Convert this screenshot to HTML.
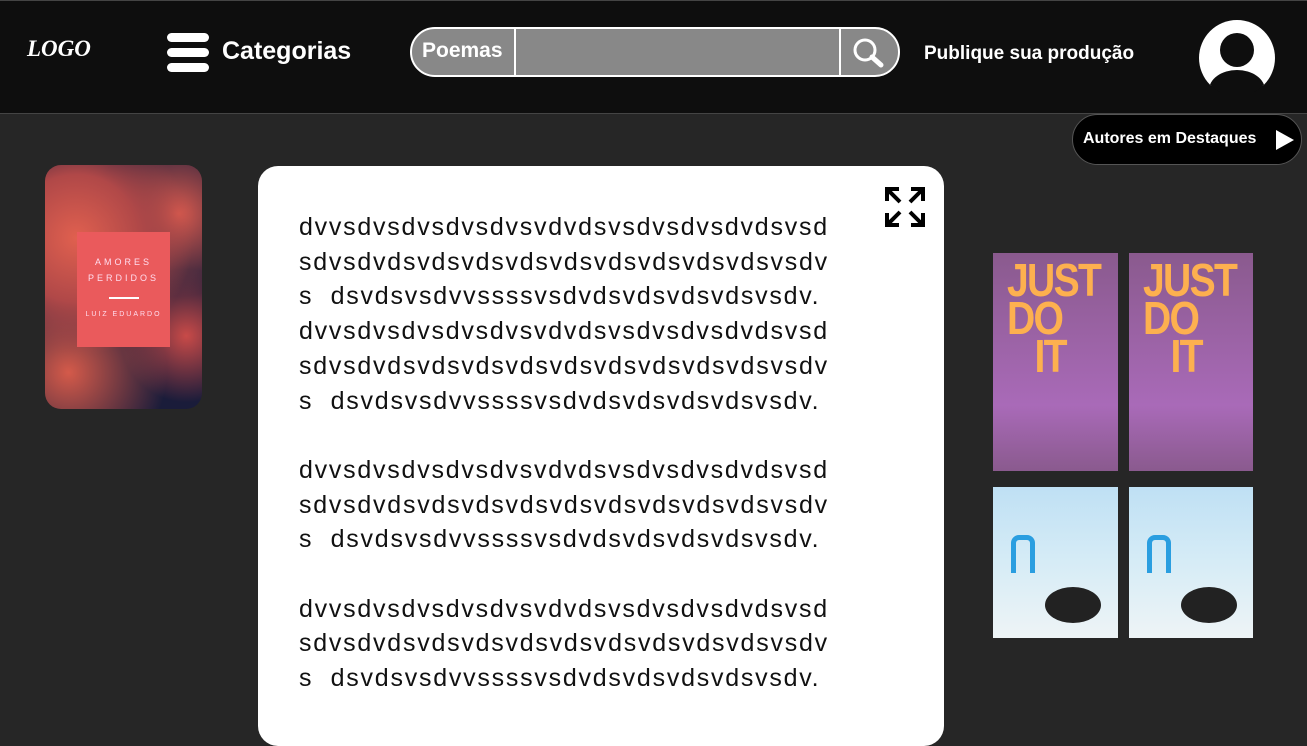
<!DOCTYPE html>
<html><head><meta charset="utf-8"><style>
*{margin:0;padding:0;box-sizing:border-box}
body{width:1307px;height:737px;background:#262626;font-family:"Liberation Sans",sans-serif;overflow:hidden;position:relative}
.hdr{position:absolute;left:0;top:0;width:1307px;height:114px;background:#0e0e0e;border-top:1px solid #444;border-bottom:1px solid #444}
.abs{position:absolute}
.nk{color:#fdb04f;font-weight:bold;font-size:46px;line-height:38px;padding:8px 0 0 14px;overflow:hidden;letter-spacing:-2px}
.nk span{display:inline-block;transform:scaleX(.85);transform-origin:left}
</style></head><body>
<div class="hdr"></div>
<div class="abs" style="left:27px;top:36px;color:#fff;font-family:'Liberation Serif',serif;font-style:italic;font-weight:bold;font-size:23px">LOGO</div>
<div class="abs" style="left:167px;top:33px;width:42px;height:9px;background:#fff;border-radius:5px"></div>
<div class="abs" style="left:167px;top:48px;width:42px;height:9px;background:#fff;border-radius:5px"></div>
<div class="abs" style="left:167px;top:63px;width:42px;height:9px;background:#fff;border-radius:5px"></div>
<div class="abs" style="left:222px;top:37px;color:#fff;font-weight:bold;font-size:25px">Categorias</div>
<div class="abs" style="left:410px;top:27px;width:490px;height:50px;background:#888;border:2px solid #fff;border-radius:25px"></div>
<div class="abs" style="left:514px;top:29px;width:2px;height:46px;background:#fff"></div>
<div class="abs" style="left:839px;top:29px;width:2px;height:46px;background:#fff"></div>
<div class="abs" style="left:422px;top:39px;color:#fff;font-weight:bold;font-size:21px">Poemas</div>
<svg class="abs" style="left:850px;top:36px" width="36" height="34" viewBox="0 0 36 34"><circle cx="15" cy="14" r="10" fill="none" stroke="#fff" stroke-width="3"/><line x1="22" y1="21" x2="31" y2="29" stroke="#fff" stroke-width="5" stroke-linecap="round"/></svg>
<div class="abs" style="left:924px;top:43px;color:#fff;font-weight:bold;font-size:19px">Publique sua produção</div>
<svg class="abs" style="left:1198px;top:20px" width="78" height="72" viewBox="0 0 78 72"><defs><clipPath id="c"><circle cx="39" cy="38" r="38"/></clipPath></defs><g clip-path="url(#c)"><rect x="0" y="0" width="78" height="66" fill="#fff"/><circle cx="39" cy="30" r="17" fill="#0e0e0e"/><ellipse cx="39" cy="70" rx="28" ry="20" fill="#0e0e0e"/><rect x="0" y="66" width="78" height="12" fill="#0e0e0e"/></g></svg>
<div class="abs" style="left:1072px;top:114px;width:230px;height:51px;background:#000;border:1px solid #555;border-radius:26px"></div>
<div class="abs" style="left:1083px;top:130px;color:#fff;font-weight:bold;font-size:16px">Autores em Destaques</div>
<svg class="abs" style="left:1275px;top:129px" width="20" height="22"><polygon points="1,1 19,11 1,21" fill="#fff"/></svg>
<div class="abs" style="left:45px;top:165px;width:157px;height:244px;border-radius:16px;overflow:hidden;background:radial-gradient(circle at 20% 30%,#e0604f 0,#b04848 30%,transparent 55%),radial-gradient(circle at 85% 20%,#d85a4e 0,transparent 35%),radial-gradient(circle at 15% 85%,#d45a4a 0,transparent 40%),radial-gradient(circle at 90% 70%,#c84a48 0,transparent 30%),#1a1c3a">
<div class="abs" style="left:32px;top:67px;width:93px;height:115px;background:#ea5a5c;color:#fde;text-align:center;font-size:9px;letter-spacing:3px">
<div style="margin-top:25px">AMORES</div><div style="margin-top:6px">PERDIDOS</div>
<div style="width:30px;height:2px;background:#fff;margin:14px auto 12px"></div>
<div style="font-size:7px;letter-spacing:2px;white-space:nowrap">LUIZ EDUARDO</div></div></div>
<div class="abs" style="left:258px;top:166px;width:686px;height:580px;background:#fff;border-radius:20px"></div>
<svg class="abs" style="left:884px;top:186px" width="42" height="42" viewBox="0 0 42 42" fill="none" stroke="#000" stroke-width="4"><path d="M3 15V3H15M3 3L16 16M27 3H39V15M39 3L26 16M3 27V39H15M3 39L16 26M39 27V39H27M39 39L26 26"/></svg>
<div class="abs" style="left:299px;top:210px;font-size:25px;line-height:34.7px;color:#111;letter-spacing:1.75px;white-space:pre">dvvsdvsdvsdvsdvsvdvdsvsdvsdvsdvdsvsd
sdvsdvdsvdsvdsvdsvdsvdsvdsvdsvdsvsdv
s  dsvdsvsdvvssssvsdvdsvdsvdsvdsvsdv.
dvvsdvsdvsdvsdvsvdvdsvsdvsdvsdvdsvsd
sdvsdvdsvdsvdsvdsvdsvdsvdsvdsvdsvsdv
s  dsvdsvsdvvssssvsdvdsvdsvdsvdsvsdv.

dvvsdvsdvsdvsdvsvdvdsvsdvsdvsdvdsvsd
sdvsdvdsvdsvdsvdsvdsvdsvdsvdsvdsvsdv
s  dsvdsvsdvvssssvsdvdsvdsvdsvdsvsdv.

dvvsdvsdvsdvsdvsvdvdsvsdvsdvsdvdsvsd
sdvsdvdsvdsvdsvdsvdsvdsvdsvdsvdsvsdv
s  dsvdsvsdvvssssvsdvdsvdsvdsvdsvsdv.</div>
<div class="abs nk" style="left:993px;top:253px;width:125px;height:218px;background:linear-gradient(#8a5a8e,#a96ab8 70%,#8a5a8e)"><span>JUST<br>DO<br>&nbsp;&nbsp;&nbsp;IT</span></div>
<div class="abs nk" style="left:1129px;top:253px;width:124px;height:218px;background:linear-gradient(#8a5a8e,#a96ab8 70%,#8a5a8e)"><span>JUST<br>DO<br>&nbsp;&nbsp;&nbsp;IT</span></div>
<div class="abs" style="left:993px;top:487px;width:125px;height:151px;background:linear-gradient(#bfe0f4,#d6ecf6 50%,#eef4f6)"><div class="abs" style="left:52px;top:100px;width:56px;height:36px;border-radius:50%;background:#222"></div><div class="abs" style="left:18px;top:48px;width:24px;height:38px;border:5px solid #2a9ee0;border-bottom:none;border-radius:8px 8px 0 0"></div></div>
<div class="abs" style="left:1129px;top:487px;width:124px;height:151px;background:linear-gradient(#bfe0f4,#d6ecf6 50%,#eef4f6)"><div class="abs" style="left:52px;top:100px;width:56px;height:36px;border-radius:50%;background:#222"></div><div class="abs" style="left:18px;top:48px;width:24px;height:38px;border:5px solid #2a9ee0;border-bottom:none;border-radius:8px 8px 0 0"></div></div>
</body></html>
